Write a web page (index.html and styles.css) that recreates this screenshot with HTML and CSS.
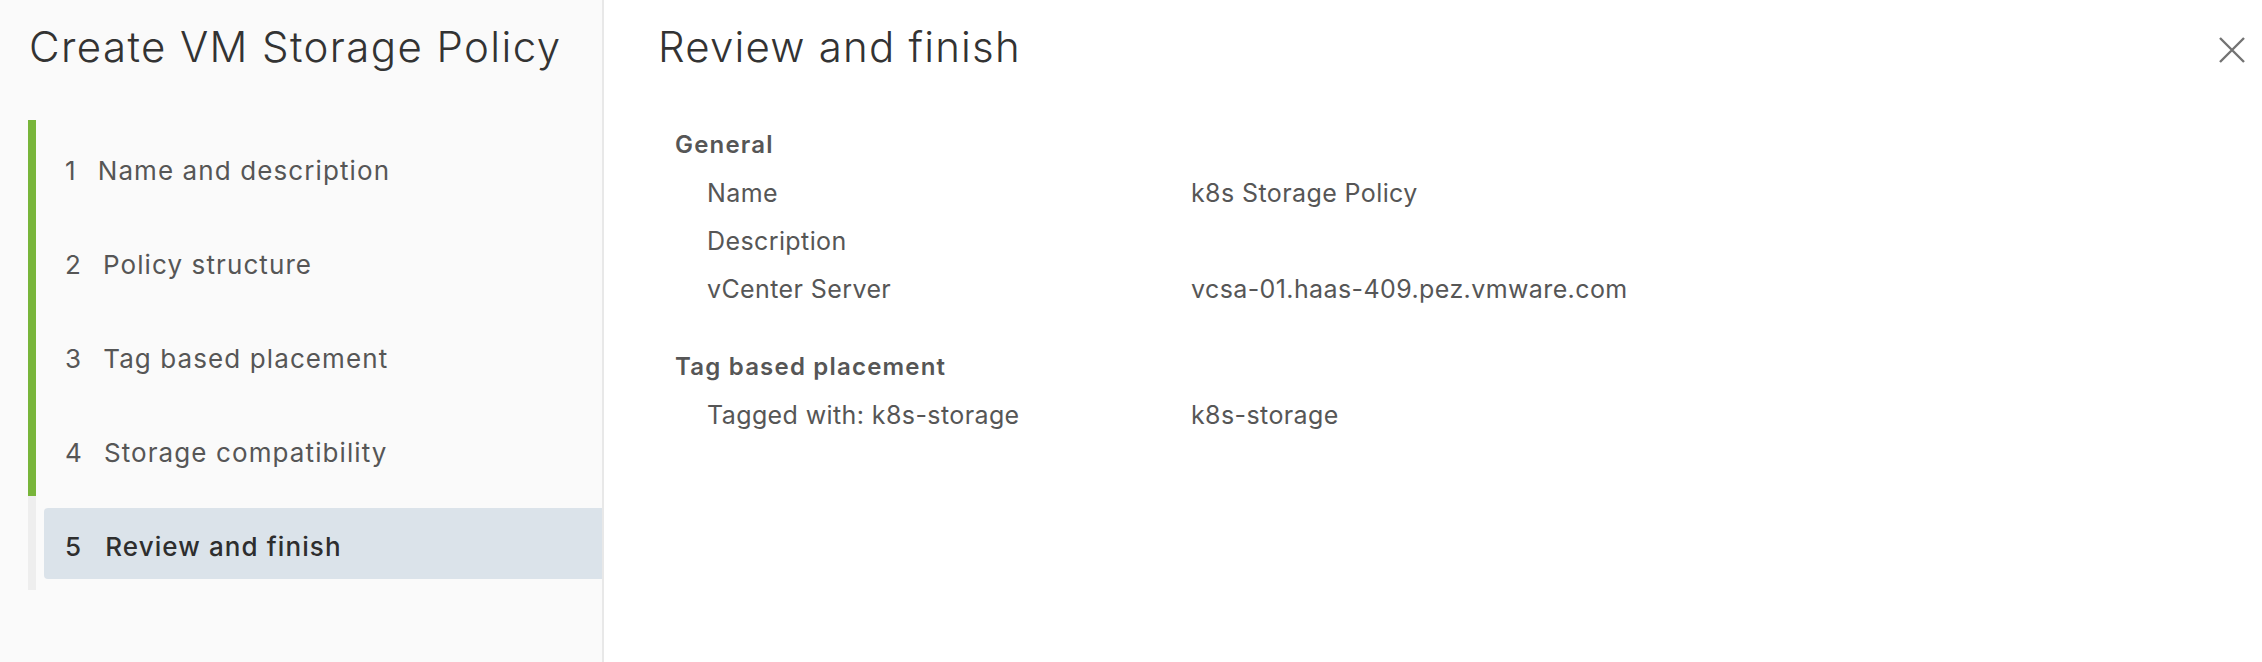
FILE: index.html
```html
<!DOCTYPE html>
<html lang="en">
<head>
<meta charset="utf-8">
<title>Create VM Storage Policy</title>
<link rel="stylesheet" href="styles.css">
</head>
<body>
<div class="wizard">
  <aside class="sidebar">
    <h2 class="wizard-title">Create VM Storage Policy</h2>
    <ol class="steps">
      <li class="step done"><span class="step-btn"><span class="num">1</span><span class="label">Name and description</span></span></li>
      <li class="step done"><span class="step-btn"><span class="num">2</span><span class="label">Policy structure</span></span></li>
      <li class="step done"><span class="step-btn"><span class="num">3</span><span class="label">Tag based placement</span></span></li>
      <li class="step done"><span class="step-btn"><span class="num">4</span><span class="label">Storage compatibility</span></span></li>
      <li class="step current"><span class="step-btn"><span class="num">5</span><span class="label">Review and finish</span></span></li>
    </ol>
  </aside>
  <main class="content">
    <header class="content-header">
      <h3 class="page-title">Review and finish</h3>
      <button class="close" aria-label="Close">
        <svg width="26" height="26" viewBox="0 0 26 26"><path d="M1 1 L25 25 M25 1 L1 25" stroke="#737373" stroke-width="2.4" fill="none"/></svg>
      </button>
    </header>
    <section class="section first">
      <div class="section-title">General</div>
      <div class="row"><span class="key">Name</span><span class="val">k8s Storage Policy</span></div>
      <div class="row"><span class="key">Description</span><span class="val"></span></div>
      <div class="row"><span class="key">vCenter Server</span><span class="val">vcsa-01.haas-409.pez.vmware.com</span></div>
    </section>
    <section class="section">
      <div class="section-title">Tag based placement</div>
      <div class="row"><span class="key">Tagged with: k8s-storage</span><span class="val">k8s-storage</span></div>
    </section>
  </main>
</div>
</body>
</html>
```
FILE: styles.css
```css
* { box-sizing: border-box; }
html, body { margin: 0; padding: 0; }
body {
  font-family: Inter, "Open Sans", "Liberation Sans", sans-serif;
  background: #ffffff;
  color: #565656;
}
.wizard {
  display: flex;
  height: 662px;
}
.sidebar {
  width: 604px;
  flex: none;
  background: #fafafa;
  border-right: 2px solid #e8e8e8;
  padding-top: 22px;
}
.wizard-title {
  margin: 0 0 48px 29px;
  font-size: 42px;
  line-height: 50px;
  font-weight: 300;
  letter-spacing: 1.4px;
  color: #333333;
  white-space: nowrap;
}
.steps {
  list-style: none;
  margin: 0;
  padding: 0 0 0 28px;
}
.step {
  height: 94px;
  border-left: 8px solid #eeeeee;
  padding: 12px 0 0 8px;
}
.step.done { border-left-color: #78b53a; }
.step-btn {
  display: flex;
  height: 71px;
  padding: 23px 0 0 21px;
  font-size: 26px;
  line-height: 32px;
  letter-spacing: 1.1px;
  color: #565656;
  border-radius: 4px 0 0 4px;
  font-variant-numeric: proportional-nums;
}
.step.current .step-btn {
  background: #dbe3ea;
  color: #2e2e2e;
  font-weight: 500;
  letter-spacing: 1.1px;
}
.num { margin-right: 21px; flex: none; }
.step.current .num { margin-right: 23px; }
.content {
  flex: 1;
  padding: 22px 17px 0 54px;
}
.content-header {
  display: flex;
  justify-content: space-between;
  align-items: flex-start;
}
.page-title {
  margin: 0;
  font-size: 42px;
  line-height: 50px;
  font-weight: 300;
  letter-spacing: 1.2px;
  color: #333333;
}
.close {
  margin-top: 15px;
  padding: 0;
  border: 0;
  background: none;
  width: 26px;
  height: 26px;
  display: flex;
}
.section { padding-left: 17px; margin-top: 38px; }
.section.first { margin-top: 57px; }
.section-title {
  font-size: 24px;
  line-height: 32px;
  font-weight: 600;
  letter-spacing: 1.2px;
  color: #565656;
  margin-bottom: 8px;
}
.row {
  display: grid;
  grid-template-columns: 484px 1fr;
  padding-left: 32px;
  height: 48px;
  font-size: 25px;
  line-height: 48px;
  letter-spacing: 0.4px;
}
```
